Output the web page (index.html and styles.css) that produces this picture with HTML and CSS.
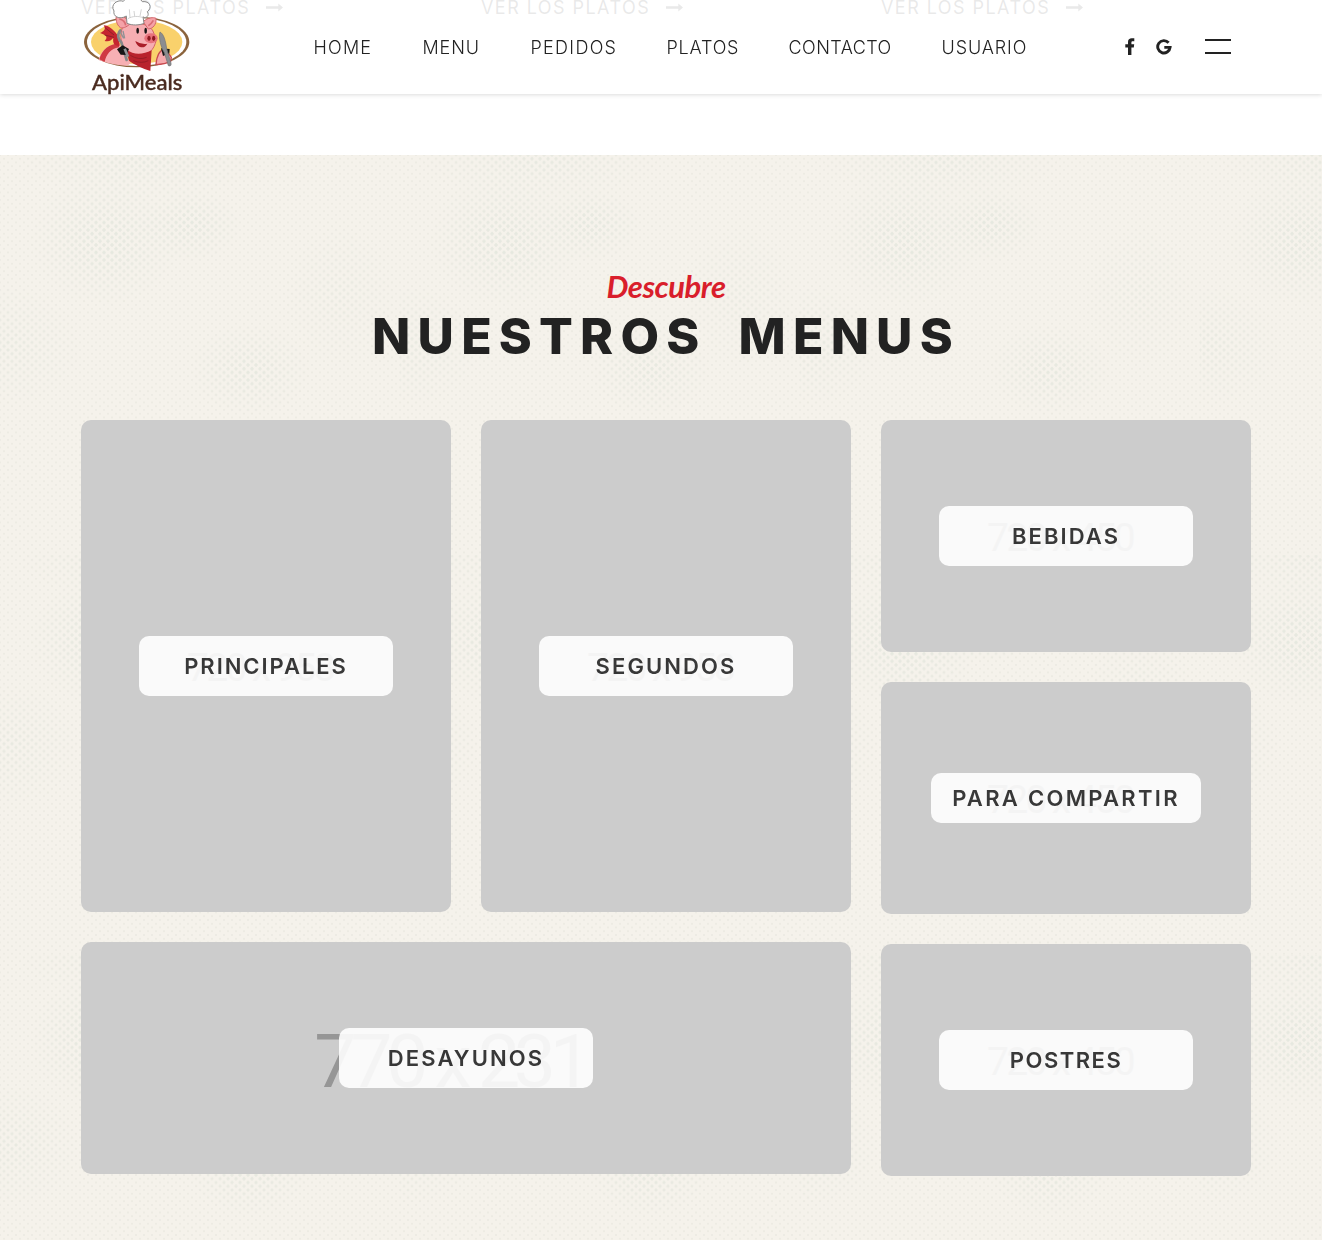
FILE: index.html
```html
<!DOCTYPE html>
<html lang="es">
<head>
<meta charset="utf-8">
<title>ApiMeals</title>
<link rel="stylesheet" href="styles.css">
</head>
<body>
<svg width="0" height="0" class="defs"><symbol id="arrow" viewBox="0 0 17 9"><path d="M0 3.3h12.3V.4L17 4.4l-4.7 4.2V5.7H0z"/></symbol></svg>
<header class="header">
  <a class="logo">
    <svg viewBox="0 0 360 285" width="120" height="95">
      <ellipse cx="200" cy="126" rx="158" ry="76" fill="#8b633c"/>
      <ellipse cx="200" cy="126" rx="149" ry="72" fill="#fff"/>
      <ellipse cx="200" cy="126" rx="137" ry="66" fill="#f9d16c"/>
      <path d="M86 180C92 150 118 130 148 132L182 190 172 197C138 196 108 189 86 180z" fill="#f7b0b4"/>
      <path d="M88 178C96 148 118 132 148 130L147 142C122 146 108 164 104 186z" fill="#cf3a42"/>
      <path d="M258 194C260 168 268 150 286 146L304 172 302 184C290 190 274 193 258 194z" fill="#f6a9ad" stroke="#c94a50" stroke-width="4"/>
      <path d="M145 110C136 94 118 76 101 76C108 86 105 93 90 99C107 104 116 111 104 123C118 127 125 119 130 113C127 130 134 139 149 137z" fill="#c5252f"/>
      <path d="M104 82L132 105M104 105L132 112" stroke="#8e2028" stroke-width="3"/>
      <path d="M157 82C168 63 239 64 250 96L259 119C252 151 235 166 207 168C171 169 148 132 153 100z" fill="#f6aeb2" stroke="#d4656b" stroke-width="3"/>
      <path d="M140 46C158 45 176 58 180 72C169 82 156 86 151 83C139 74 136 55 140 46zM219 65C235 52 250 51 258 55C260 73 249 86 235 87z" fill="#f5a2a8" stroke="#d4656b" stroke-width="3"/>
      <path d="M148 57C160 60 166 68 167 76M250 61Q244 72 235 77" fill="none" stroke="#d96d74" stroke-width="5"/>
      <path d="M171 70L169 48C147 61 128 48 132 33C119 13 144-3 160 4C170-14 207-13 217 5C240 2 248 23 232 35C241 49 224 57 219 50L222 70C208 76 187 77 171 70z" fill="#fff" stroke="#888" stroke-width="3"/>
      <path d="M174 56C186 48 207 47 221 54M180 53L178 28M194 48L192 33M210 48L214 28" fill="none" stroke="#bbb" stroke-width="2"/>
      <path d="M168 148C193 167 218 164 245 151L241 213C218 205 193 194 177 182z" fill="#b9232d"/>
      <path d="M181 166Q207 182 230 172M190 182Q215 192 235 182" fill="none" stroke="#961c25" stroke-width="3"/>
      <ellipse cx="203" cy="92" rx="4" ry="9" fill="#171313"/><ellipse cx="227" cy="92" rx="4" ry="9" fill="#171313"/>
      <ellipse cx="243" cy="115" rx="20" ry="15" fill="#e8737c"/>
      <ellipse cx="237" cy="115" rx="5" ry="8" fill="#8f1920"/><ellipse cx="251" cy="115" rx="5" ry="8" fill="#8f1920"/>
      <path d="M196 123Q212 134 232 131C224 148 202 145 196 123z" fill="#a91e29"/>
      <path d="M151 91C140 104 145 119 154 127L170 180" fill="none" stroke="#87888a" stroke-width="8" stroke-linecap="round"/>
      <path d="M150 94L161 115M159 93L164 115" stroke="#909194" stroke-width="4"/>
      <path d="M141 148L158 136 177 147 169 165 152 164z" fill="#171616"/>
      <path d="M273 145L299 147 298 160 279 168z" fill="#171616"/>
      <path d="M270 96C281 101 287 123 290 146L303 189Q305 200 295 197L283 158C272 141 265 111 270 96z" fill="#8b8d90" stroke="#717274" stroke-width="2"/>
      <path d="M164 146L174 170" stroke="#929396" stroke-width="8"/>
      <text x="66" y="270" textLength="271" lengthAdjust="spacingAndGlyphs" class="logo-name">ApiMeals</text>
    </svg>
  </a>
  <nav class="nav">
    <a class="home">HOME</a><a class="menu">MENU</a><a class="pedidos">PEDIDOS</a><a class="platos">PLATOS</a><a class="contacto">CONTACTO</a><a class="usuario">USUARIO</a>
  </nav>
  <div class="social">
    <svg width="10" height="17" viewBox="0 0 10 17"><path d="M3 17V9.4H.3V6.3H3V4C3 1.6 4.4.3 6.8.3h2.5v3H7.7C6.8 3.3 6.4 3.7 6.4 4.5v1.8h2.8l-.4 3.1H6.4V17z"/></svg>
    <svg width="16" height="16" viewBox="0 0 16 16"><path d="M12.6 3.7A6.2 6.2 0 1 0 14.1 8.4H8.3" fill="none" stroke="#222" stroke-width="2.9"/></svg>
  </div>
  <button class="burger" aria-label="Menu"><i></i><i></i></button>
</header>
<section class="links">
  <a><span>VER LOS PLATOS</span><svg width="17" height="9"><use href="#arrow"/></svg></a>
  <a><span>VER LOS PLATOS</span><svg width="17" height="9"><use href="#arrow"/></svg></a>
  <a><span>VER LOS PLATOS</span><svg width="17" height="9"><use href="#arrow"/></svg></a>
</section>
<main class="menus">
  <div class="heading"><p>Descubre</p><h1>NUESTROS MENUS</h1></div>
  <div class="board">
    <div class="left">
      <a class="card tall"><span class="size">720 x 958</span><b class="label principales">PRINCIPALES</b></a>
      <a class="card tall"><span class="size">720 x 958</span><b class="label">SEGUNDOS</b></a>
      <a class="card wide"><span class="size big">770 x 231</span><b class="label">DESAYUNOS</b></a>
    </div>
    <div class="right">
      <a class="card"><span class="size">720 x 450</span><b class="label">BEBIDAS</b></a>
      <a class="card"><span class="size">720 x 450</span><b class="label compartir">PARA COMPARTIR</b></a>
      <a class="card"><span class="size">720 x 450</span><b class="label postres">POSTRES</b></a>
    </div>
  </div>
</main>
</body>
</html>
```
FILE: styles.css
```css
* { box-sizing: border-box; }
html { overflow: hidden; }
body { margin: 0; height: 1240px; overflow: hidden; background: #fff; color: #222; font-family: Inter, "Liberation Sans", sans-serif; }
.defs { position: absolute; }

.header { position: fixed; z-index: 2; top: 0; left: 0; width: 100%; height: 94px; display: flex; align-items: flex-start; background: rgba(255,255,255,.9); box-shadow: 0 0 5px rgba(0,0,0,.2); }
.logo { flex: none; width: 313.5px; padding-left: 70px; height: 95px; }
.logo svg { display: block; overflow: visible; }
.logo-name { font: 500 65px Lato, sans-serif; fill: #4a2b20; stroke: #4a2b20; stroke-width: 1.2px; }
.nav { flex: none; display: grid; grid-template-columns: 109px 108px 136px 122px 153px 183.5px; padding-top: 35px; font-size: 18px; font-weight: 300; line-height: 25px; white-space: nowrap; }
.home { letter-spacing: 1.2px; }
.menu { letter-spacing: .9px; }
.pedidos { letter-spacing: 1.3px; }
.platos { letter-spacing: .8px; }
.contacto { letter-spacing: .45px; }
.usuario { letter-spacing: .9px; }
.social { flex: none; display: flex; gap: 21px; width: 80px; padding-top: 38px; fill: #222; }
.social svg + svg { margin-top: 1px; }
.burger { width: 26px; height: 15px; margin: 39px 0 0; padding: 0; border: 0; background: none; display: flex; flex-direction: column; justify-content: space-between; }
.burger i { display: block; width: 26px; height: 2px; background: #222; }

.links { height: 155px; padding-left: 81px; display: grid; grid-template-columns: repeat(3, 400px); }
.links a { display: flex; gap: 16px; font-size: 18px; line-height: 24px; height: 24px; margin-top: -4px; }
.links span { width: 169px; letter-spacing: 1.45px; white-space: nowrap; }
.links svg { margin-top: 7px; fill: #222; }

.menus { position: relative; isolation: isolate; height: 1085px; padding: 113px 71px 0 81px; background: #f5f2eb; }
.menus::before, .menus::after { content: ""; position: absolute; z-index: -1; inset: 0; }
.menus::before { opacity: .6; background: radial-gradient(circle, #e8e8df 0 .8px, transparent 1.1px) 0 0 / 8px 7.5px, radial-gradient(circle, #e8e8df 0 .8px, transparent 1.1px) 4px 3.75px / 8px 7.5px; }
.menus::after {
  background: radial-gradient(circle, #e4e7de 0 1.4px, transparent 2px) 0 0 / 8px 7.5px, radial-gradient(circle, #e4e7de 0 1.4px, transparent 2px) 4px 3.75px / 8px 7.5px;
  -webkit-mask-image: radial-gradient(ellipse 75px 65px at 105px 85px, #000c 20%, transparent), radial-gradient(ellipse 50px 36px at 190px 70px, #000c 20%, transparent), radial-gradient(ellipse 120px 40px at 140px 5px, #000a, transparent), radial-gradient(ellipse 60px 45px at 250px 215px, #000c, transparent), radial-gradient(ellipse 70px 60px at 10px 190px, #0008, transparent), radial-gradient(ellipse 55px 70px at 340px 140px, #0006, transparent);
  -webkit-mask-size: 400px 400px;
}
.heading { height: 152px; text-align: center; }
.heading p { margin: 0 0 2px; font: italic 700 31px/36px Lato, sans-serif; color: #d91e2b; letter-spacing: -.45px; }
.heading h1 { margin: 0; font-size: 50px; line-height: 60px; font-weight: 800; letter-spacing: 7.2px; word-spacing: 14px; white-space: nowrap; }
.board { display: flex; gap: 30px; align-items: flex-start; }
.left { width: 770px; display: grid; grid-template-columns: 370px 370px; grid-template-rows: 492px 232px; gap: 30px; }
.right { width: 370px; display: grid; grid-template-rows: repeat(3, 232px); gap: 30px; }
.card { display: grid; place-items: center; border-radius: 10px; background: #ccc; }
.card > * { grid-area: 1 / 1; }
.wide { grid-column: 1 / 3; }
.size { font: 39px/40px Roboto, "Liberation Sans", sans-serif; color: #969696; letter-spacing: -2.7px; padding-top: 3px; margin-right: 12px; white-space: nowrap; }
.tall .size { padding-top: 3px; }
.size.big { font-size: 75px; line-height: 80px; letter-spacing: -6.2px; margin-right: 32px; padding-top: 5px; }
.label { width: 254.5px; height: 60px; border-radius: 10px; background: #fff; opacity: .9; display: flex; align-items: center; justify-content: center; color: #2a2a2a; font-size: 22px; font-weight: 600; letter-spacing: 2.1px; white-space: nowrap; }
.label.principales { letter-spacing: 1.95px; }
.label.compartir { width: 270px; height: 50px; letter-spacing: 2.3px; }
.label.postres { letter-spacing: 1.5px; }
```
